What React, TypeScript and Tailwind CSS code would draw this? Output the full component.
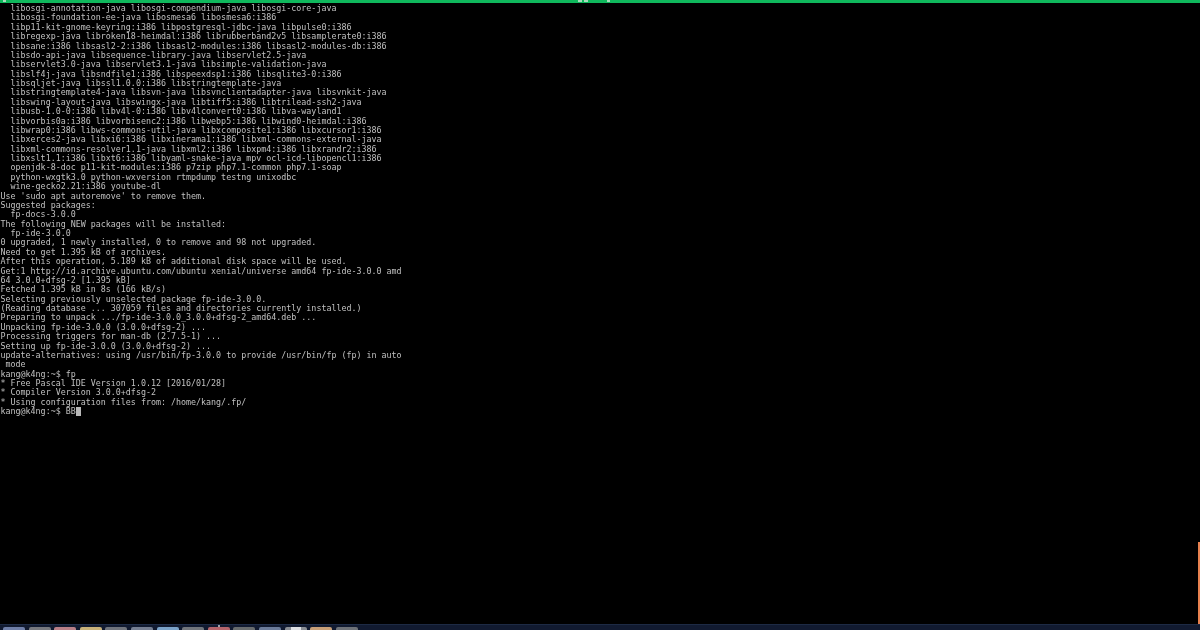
const lines = [
  "  libosgi-annotation-java libosgi-compendium-java libosgi-core-java",
  "  libosgi-foundation-ee-java libosmesa6 libosmesa6:i386",
  "  libp11-kit-gnome-keyring:i386 libpostgresql-jdbc-java libpulse0:i386",
  "  libregexp-java libroken18-heimdal:i386 librubberband2v5 libsamplerate0:i386",
  "  libsane:i386 libsasl2-2:i386 libsasl2-modules:i386 libsasl2-modules-db:i386",
  "  libsdo-api-java libsequence-library-java libservlet2.5-java",
  "  libservlet3.0-java libservlet3.1-java libsimple-validation-java",
  "  libslf4j-java libsndfile1:i386 libspeexdsp1:i386 libsqlite3-0:i386",
  "  libsqljet-java libssl1.0.0:i386 libstringtemplate-java",
  "  libstringtemplate4-java libsvn-java libsvnclientadapter-java libsvnkit-java",
  "  libswing-layout-java libswingx-java libtiff5:i386 libtrilead-ssh2-java",
  "  libusb-1.0-0:i386 libv4l-0:i386 libv4lconvert0:i386 libva-wayland1",
  "  libvorbis0a:i386 libvorbisenc2:i386 libwebp5:i386 libwind0-heimdal:i386",
  "  libwrap0:i386 libws-commons-util-java libxcomposite1:i386 libxcursor1:i386",
  "  libxerces2-java libxi6:i386 libxinerama1:i386 libxml-commons-external-java",
  "  libxml-commons-resolver1.1-java libxml2:i386 libxpm4:i386 libxrandr2:i386",
  "  libxslt1.1:i386 libxt6:i386 libyaml-snake-java mpv ocl-icd-libopencl1:i386",
  "  openjdk-8-doc p11-kit-modules:i386 p7zip php7.1-common php7.1-soap",
  "  python-wxgtk3.0 python-wxversion rtmpdump testng unixodbc",
  "  wine-gecko2.21:i386 youtube-dl",
  "Use 'sudo apt autoremove' to remove them.",
  "Suggested packages:",
  "  fp-docs-3.0.0",
  "The following NEW packages will be installed:",
  "  fp-ide-3.0.0",
  "0 upgraded, 1 newly installed, 0 to remove and 98 not upgraded.",
  "Need to get 1.395 kB of archives.",
  "After this operation, 5.189 kB of additional disk space will be used.",
  "Get:1 http://id.archive.ubuntu.com/ubuntu xenial/universe amd64 fp-ide-3.0.0 amd",
  "64 3.0.0+dfsg-2 [1.395 kB]",
  "Fetched 1.395 kB in 8s (166 kB/s)",
  "Selecting previously unselected package fp-ide-3.0.0.",
  "(Reading database ... 307059 files and directories currently installed.)",
  "Preparing to unpack .../fp-ide-3.0.0_3.0.0+dfsg-2_amd64.deb ...",
  "Unpacking fp-ide-3.0.0 (3.0.0+dfsg-2) ...",
  "Processing triggers for man-db (2.7.5-1) ...",
  "Setting up fp-ide-3.0.0 (3.0.0+dfsg-2) ...",
  "update-alternatives: using /usr/bin/fp-3.0.0 to provide /usr/bin/fp (fp) in auto",
  " mode",
  "kang@k4ng:~$ fp",
  "* Free Pascal IDE Version 1.0.12 [2016/01/28]",
  "* Compiler Version 3.0.0+dfsg-2",
  "* Using configuration files from: /home/kang/.fp/",
];

const dockIcons = [
  "bg-[#6f7fa8]", "bg-[#77797f]", "bg-[#b98088]", "bg-[#c9b27a]", "bg-[#70747c]",
  "bg-[#767f92]", "bg-[#7ba3c9]", "bg-[#72767c]", "bg-[#b5656c]", "bg-[#686c6e]",
  "bg-[#6c7c9a]", "bg-[#8a8e94]", "bg-[#c9a078]", "bg-[#6e7278]",
];

export default function App() {
  return (
    <div className="flex h-[630px] w-[1200px] flex-col overflow-hidden bg-black">
      {/* title bar, only the lower edge of the window title is visible */}
      <div className="flex h-[3px] shrink-0 bg-[#0fb85c] pl-[3px]">
        <div className="h-[2px] w-[3px] bg-[#a9dcbd]" />
        <div className="ml-[572px] h-[2px] w-[4px] bg-[#a9dcbd]" />
        <div className="ml-[2px] h-[2px] w-[4px] bg-[#a9dcbd]" />
        <div className="ml-[19px] h-[2px] w-[3px] bg-[#a9dcbd]" />
      </div>
      <div className="flex min-h-0 flex-1">
        <pre className="flex-1 pl-[0.5px] pt-[1px] font-['DejaVu_Sans_Mono',monospace] text-[8.33px] leading-[9.375px] text-[#c0c0c0] [filter:blur(0.3px)]">
          {lines.join("\n")}
          {"\nkang@k4ng:~$ BB"}
          <span className="inline-block h-[9px] w-[5px] bg-[#b8b8b8] align-[-2px]" />
        </pre>
        <div className="mt-[539px] h-[82px] w-[2px] bg-[#e8814f]" />
      </div>
      <div className="relative flex h-[6px] shrink-0 items-end gap-[3.6px] border-t border-[#1d2a44] bg-[#111a30] pl-[3px]">
        <div className="absolute left-[218px] top-0 h-[2px] w-[2px] bg-[#9aa0aa]" />
        {dockIcons.map((icon, i) => (
          <div key={i} className={`flex h-[3px] w-[22px] justify-center rounded-t-[2px] ${icon}`}>
            {i === 11 && <div className="h-[3px] w-[10px] bg-[#dfe1e4]" />}
          </div>
        ))}
      </div>
    </div>
  );
}
